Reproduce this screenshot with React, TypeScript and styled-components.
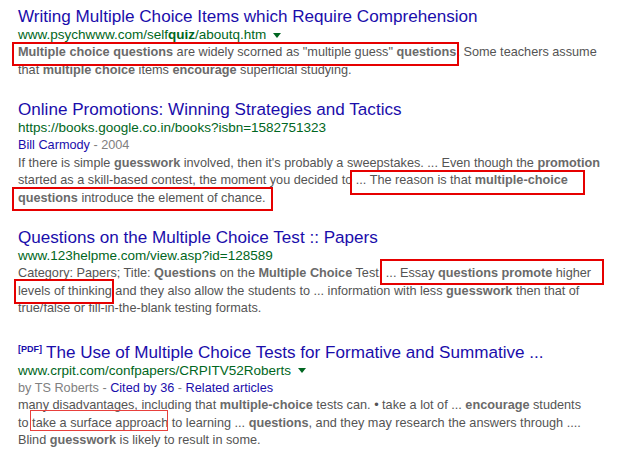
import React from 'react';
import styled, { createGlobalStyle } from 'styled-components';

const GlobalStyle = createGlobalStyle`
  html, body {
    margin: 0;
    padding: 0;
    background: #ffffff;
  }
  body {
    font-family: 'Liberation Sans', Arial, sans-serif;
  }
`;

const Page = styled.div`
  position: relative;
  width: 624px;
  height: 458px;
  overflow: hidden;
  padding: 8px 0 0 18px;
  box-sizing: border-box;
  font-family: 'Liberation Sans', Arial, sans-serif;
`;

const Result = styled.div`
  margin-bottom: 22px;
`;

const Title = styled.h3`
  margin: 0;
  font-size: 17.1px;
  line-height: 18px;
  font-weight: normal;
  color: #1a0dab;
  white-space: nowrap;
`;

const FileType = styled.span`
  font-size: 9px;
  font-weight: bold;
  vertical-align: 6px;
  margin-right: 4px;
  color: #1a0dab;
`;

const Url = styled.div`
  font-size: 13.5px;
  line-height: 18px;
  color: #006621;
  white-space: nowrap;

  b {
    font-weight: bold;
  }
`;

const UrlArrow = styled.span`
  display: inline-block;
  width: 0;
  height: 0;
  margin-left: 7px;
  vertical-align: middle;
  border-left: 4px solid transparent;
  border-right: 4px solid transparent;
  border-top: 5px solid #006621;
`;

const Meta = styled.div`
  font-size: 12.7px;
  line-height: 17.5px;
  color: #808080;
  white-space: nowrap;
`;

const MetaLink = styled.span`
  color: #1a0dab;
`;

const Snippet = styled.div`
  font-size: 12.7px;
  line-height: 17.5px;
  color: #545454;
  white-space: nowrap;

  b {
    color: #6a6a6a;
    font-weight: bold;
  }
`;

const Mark = styled.div<{ $x: number; $y: number; $w: number; $h: number; $thin?: boolean }>`
  position: absolute;
  left: ${(p) => p.$x}px;
  top: ${(p) => p.$y}px;
  width: ${(p) => p.$w}px;
  height: ${(p) => p.$h}px;
  box-sizing: border-box;
  border: ${(p) => (p.$thin ? '1px solid #e8403c' : '2px solid #e60000')};
  pointer-events: none;
`;

const marks = [
  { x: 12, y: 42, w: 447, h: 24 },
  { x: 350, y: 170, w: 235, h: 25 },
  { x: 12, y: 187, w: 261, h: 24 },
  { x: 380, y: 259, w: 224, h: 26 },
  { x: 14, y: 279, w: 100, h: 25 },
  { x: 30, y: 410, w: 138, h: 21, thin: true }
];

export default function App() {
  return (
    <>
      <GlobalStyle />
      <Page>
        <Result>
          <Title>Writing Multiple Choice Items which Require Comprehension</Title>
          <Url>
            www.psychwww.com/self<b>quiz</b>/aboutq.htm
            <UrlArrow />
          </Url>
          <Snippet>
            <b>Multiple choice questions</b> are widely scorned as "multiple guess" <b>questions</b>. Some teachers assume
            <br />
            that <b>multiple choice</b> items <b>encourage</b> superficial studying.
          </Snippet>
        </Result>

        <Result>
          <Title>Online Promotions: Winning Strategies and Tactics</Title>
          <Url>https://books.google.co.in/books?isbn=1582751323</Url>
          <Meta>
            <MetaLink>Bill Carmody</MetaLink> - 2004
          </Meta>
          <Snippet>
            If there is simple <b>guesswork</b> involved, then it's probably a sweepstakes. ... Even though the <b>promotion</b>
            <br />
            started as a skill-based contest, the moment you decided to ... The reason is that <b>multiple-choice</b>
            <br />
            <b>questions</b> introduce the element of chance.
          </Snippet>
        </Result>

        <Result>
          <Title>Questions on the Multiple Choice Test :: Papers</Title>
          <Url>www.123helpme.com/view.asp?id=128589</Url>
          <Snippet>
            Category: Papers; Title: <b>Questions</b> on the <b>Multiple Choice</b> Test. ... Essay <b>questions promote</b> higher
            <br />
            levels of thinking and they also allow the students to ... information with less <b>guesswork</b> then that of
            <br />
            true/false or fill-in-the-blank testing formats.
          </Snippet>
        </Result>

        <Result>
          <Title>
            <FileType>[PDF]</FileType>The Use of Multiple Choice Tests for Formative and Summative ...
          </Title>
          <Url>
            www.crpit.com/confpapers/CRPITV52Roberts
            <UrlArrow />
          </Url>
          <Meta>
            by TS Roberts - <MetaLink>Cited by 36</MetaLink> - <MetaLink>Related articles</MetaLink>
          </Meta>
          <Snippet>
            many disadvantages, including that <b>multiple-choice</b> tests can. • take a lot of ... <b>encourage</b> students
            <br />
            to take a surface approach to learning ... <b>questions</b>, and they may research the answers through ....
            <br />
            Blind <b>guesswork</b> is likely to result in some.
          </Snippet>
        </Result>

        {marks.map((m, i) => (
          <Mark key={i} $x={m.x} $y={m.y} $w={m.w} $h={m.h} $thin={m.thin} />
        ))}
      </Page>
    </>
  );
}
